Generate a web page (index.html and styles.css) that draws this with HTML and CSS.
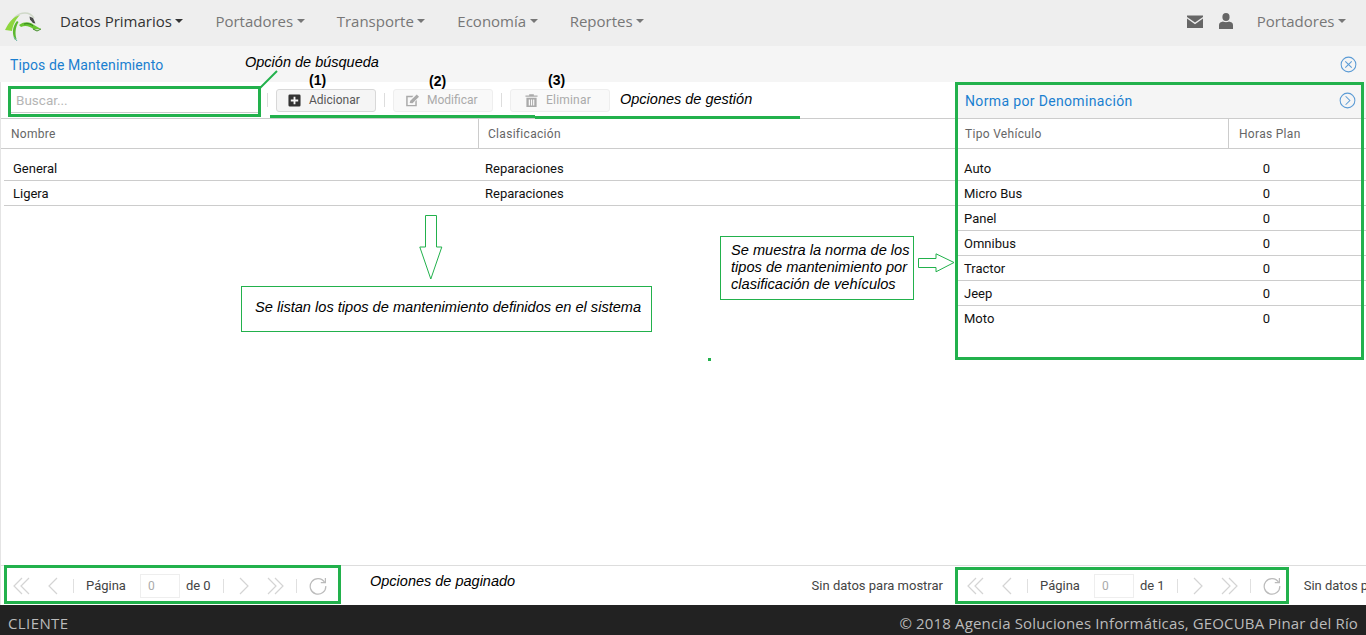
FILE: index.html
```html
<!DOCTYPE html>
<html lang="es">
<head>
  <meta charset="UTF-8" />
  <meta name="viewport" content="width=device-width, initial-scale=1.0" />
  <title>Tipos de Mantenimiento</title>
  <link rel="stylesheet" href="styles.css">
</head>
<body>
  <div class="app">
    <nav class="navbar">
      <svg class="logo" viewBox="0 0 44 38" width="44" height="38">
        <path d="M10 23 C12 14 18 9 25 9 C29 9 32 11 34 14" fill="none" stroke="#cfd8c8" stroke-width="1.4"/>
        <path d="M5 26 C9 18 13 13 20 11 C16 15 13 20 12 27 C10 27 8 26 5 26 Z" fill="#8ed63f"/>
        <path d="M15 36 C12 30 12 23 17 17 L18.5 18 C15 24 15 30 16.5 35 Z" fill="#5cb82e"/>
        <path d="M14 33 L17 37" stroke="#6ab5a8" stroke-width="1"/>
        <path d="M19 21 C25 17 30 18 34 21 L41 25 L34 25.5 C30 22 25 21 21 23 Z" fill="#69c531"/>
        <path d="M24 20 C28 19 31 20 33 22" fill="none" stroke="#2f7d1f" stroke-width="1"/>
        <path d="M29.5 12.5 L33 14 L35.5 19.5 L33 19 L30 15.5 Z" fill="#4a4a4a"/>
        <path d="M33 25 L37 27 L41 25" fill="none" stroke="#3d8a22" stroke-width="1"/>
      </svg>
      <a class="nav-item active">Datos Primarios<i class="caret"></i></a>
      <a class="nav-item">Portadores<i class="caret"></i></a>
      <a class="nav-item">Transporte<i class="caret"></i></a>
      <a class="nav-item">Economía<i class="caret"></i></a>
      <a class="nav-item">Reportes<i class="caret"></i></a>
      <div class="nav-right">
        <svg class="nav-icon" viewBox="0 0 16 13" width="16" height="13">
          <path d="M0 0.5 H16 V2 L8 7.5 L0 2 Z"/>
          <path d="M0 3.6 L8 9.2 L16 3.6 V13 H0 Z"/>
        </svg>
        <svg class="nav-icon user-icon" viewBox="0 0 14 16" width="14" height="16">
          <ellipse cx="7" cy="4" rx="3.6" ry="4"/>
          <path d="M0 16 V12 C0 10 2 9 4 8.6 C5 9.4 9 9.4 10 8.6 C12 9 14 10 14 12 V16 Z"/>
        </svg>
        <a class="nav-item">Portadores<i class="caret"></i></a>
      </div>
    </nav>

    <div class="title-bar">
      <span class="panel-title">Tipos de Mantenimiento</span>
      <svg class="circle-btn" viewBox="0 0 18 18" width="17" height="17">
        <circle cx="9" cy="9" r="7.8"/>
        <path d="M5.6 5.6 L12.4 12.4 M12.4 5.6 L5.6 12.4"/>
      </svg>
    </div>

    <div class="content">
      <section class="grid-left">
        <div class="toolbar">
          <input class="search" type="text" placeholder="Buscar..." />
          <span class="tb-sep"></span>
          <button class="tb-btn">
            <svg viewBox="0 0 14 14" width="13" height="13"><path fill-rule="evenodd" d="M2 0.5 H12 A1.5 1.5 0 0 1 13.5 2 V12 A1.5 1.5 0 0 1 12 13.5 H2 A1.5 1.5 0 0 1 0.5 12 V2 A1.5 1.5 0 0 1 2 0.5 Z M6 3 V6 H3 V8 H6 V11 H8 V8 H11 V6 H8 V3 Z"/></svg>
            Adicionar
          </button>
          <span class="tb-sep"></span>
          <button class="tb-btn disabled tb-edit">
            <svg viewBox="0 0 16 14" width="15" height="13"><path d="M1.5 2 H9 L7.6 3.5 H2.8 V11.8 H11 V8 L12.6 6.4 V13.3 H1.2 V2 Z"/><path d="M5 9.8 L5.6 7.4 L12.6 0.6 L15 3 L8 9.9 Z"/></svg>
            Modificar
          </button>
          <span class="tb-sep"></span>
          <button class="tb-btn disabled tb-del">
            <svg viewBox="0 0 14 14" width="13" height="13"><path d="M0.5 1.5 H4.5 V0.3 H9.5 V1.5 H13.5 V3 H0.5 Z"/><path fill-rule="evenodd" d="M1.5 4 H12.5 V14 H1.5 Z M4 6 V12.5 H5.4 V6 Z M6.4 6 V12.5 H7.7 V6 Z M8.7 6 V12.5 H10 V6 Z"/></svg>
            Eliminar
          </button>
        </div>
        <div class="grid-head">
          <div class="head-cell col-name">Nombre</div>
          <div class="head-cell col-class">Clasificación</div>
        </div>
        <div class="grid-body">
          <div class="row"><span class="col-name">General</span><span>Reparaciones</span></div>
          <div class="row"><span class="col-name">Ligera</span><span>Reparaciones</span></div>
        </div>
        <div class="pager">
          <svg class="pg-ico pg-first" viewBox="0 0 17 18" width="17" height="18"><path d="M9 1 L1 9 L9 17 M16 1 L8 9 L16 17"/></svg>
          <svg class="pg-ico pg-prev" viewBox="0 0 12 18" width="12" height="18"><path d="M10 1 L2 9 L10 17"/></svg>
          <span class="pg-sep sep-a"></span>
          <span class="pg-label">Página</span>
          <input class="pg-input" type="text" value="0" disabled />
          <span class="pg-of">de 0</span>
          <span class="pg-sep sep-b"></span>
          <svg class="pg-ico pg-next" viewBox="0 0 12 18" width="12" height="18"><path d="M2 1 L10 9 L2 17"/></svg>
          <svg class="pg-ico pg-last" viewBox="0 0 17 18" width="17" height="18"><path d="M1 1 L9 9 L1 17 M8 1 L16 9 L8 17"/></svg>
          <span class="pg-sep sep-c"></span>
          <svg class="pg-ico pg-refresh" viewBox="0 0 18 18" width="18" height="18"><path d="M15.6 5.2 A7.8 7.8 0 1 0 16.8 9"/><path d="M16.4 1 V5.6 H11.8"/></svg>
          <span class="pg-info">Sin datos para mostrar</span>
        </div>
      </section>

      <aside class="grid-right">
        <div class="side-title">
          <span class="panel-title">Norma por Denominación</span>
          <svg class="circle-btn" viewBox="0 0 18 18" width="17" height="17">
            <circle cx="9" cy="9" r="7.8"/>
            <path d="M7 4.5 L11.5 9 L7 13.5"/>
          </svg>
        </div>
        <div class="grid-head">
          <div class="head-cell col-type">Tipo Vehículo</div>
          <div class="head-cell col-hours">Horas Plan</div>
        </div>
        <div class="grid-body">
          <div class="row side-row"><span class="col-type">Auto</span><span class="cell-num">0</span></div>
          <div class="row side-row"><span class="col-type">Micro Bus</span><span class="cell-num">0</span></div>
          <div class="row side-row"><span class="col-type">Panel</span><span class="cell-num">0</span></div>
          <div class="row side-row"><span class="col-type">Omnibus</span><span class="cell-num">0</span></div>
          <div class="row side-row"><span class="col-type">Tractor</span><span class="cell-num">0</span></div>
          <div class="row side-row"><span class="col-type">Jeep</span><span class="cell-num">0</span></div>
          <div class="row side-row no-line"><span class="col-type">Moto</span><span class="cell-num">0</span></div>
        </div>
        <div class="pager pager-side">
          <svg class="pg-ico pg-first" viewBox="0 0 17 18" width="17" height="18"><path d="M9 1 L1 9 L9 17 M16 1 L8 9 L16 17"/></svg>
          <svg class="pg-ico pg-prev" viewBox="0 0 12 18" width="12" height="18"><path d="M10 1 L2 9 L10 17"/></svg>
          <span class="pg-sep sep-a"></span>
          <span class="pg-label">Página</span>
          <input class="pg-input" type="text" value="0" disabled />
          <span class="pg-of">de 1</span>
          <span class="pg-sep sep-b"></span>
          <svg class="pg-ico pg-next" viewBox="0 0 12 18" width="12" height="18"><path d="M2 1 L10 9 L2 17"/></svg>
          <svg class="pg-ico pg-last" viewBox="0 0 17 18" width="17" height="18"><path d="M1 1 L9 9 L1 17 M8 1 L16 9 L8 17"/></svg>
          <span class="pg-sep sep-c"></span>
          <svg class="pg-ico pg-refresh" viewBox="0 0 18 18" width="18" height="18"><path d="M15.6 5.2 A7.8 7.8 0 1 0 16.8 9"/><path d="M16.4 1 V5.6 H11.8"/></svg>
          <span class="pg-clipped">Sin datos para mostrar</span>
        </div>
      </aside>
    </div>

    <footer class="footer">
      <span class="client">CLIENTE</span>
      <span class="copy">© 2018 Agencia Soluciones Informáticas, GEOCUBA Pinar del Río</span>
    </footer>
  </div>

  <!-- anotaciones del manual, encima de la pantalla -->
  <div class="note note-search">Opción de búsqueda</div>
  <svg class="mark mark-leader" width="24" height="20" viewBox="0 0 24 20"><path d="M2 19 L19 2"/></svg>
  <div class="frame frame-search"></div>
  <div class="num num-1">(1)</div>
  <div class="num num-2">(2)</div>
  <div class="num num-3">(3)</div>
  <div class="underline underline-a"></div>
  <div class="underline underline-b"></div>
  <div class="note note-gestion">Opciones de gestión</div>
  <div class="frame frame-side"></div>
  <div class="frame frame-pager-left"></div>
  <div class="frame frame-pager-right"></div>
  <div class="note note-pager">Opciones de paginado</div>
  <div class="box box-list">Se listan los tipos de mantenimiento definidos en el sistema</div>
  <div class="box box-side">Se muestra la norma de los tipos de mantenimiento por clasificación de vehículos</div>
  <svg class="arrow arrow-down" width="24" height="66" viewBox="0 0 24 66"><path d="M6.5 0.5 H17.5 V32 H22.8 L11.8 64 L0.8 32 H6.5 Z"/></svg>
  <svg class="arrow arrow-right" width="38" height="20" viewBox="0 0 38 20"><path d="M0.5 5.5 H18 V0.8 L36 9.5 L18 18.8 V14.5 H0.5 Z"/></svg>
  <div class="dot"></div>
</body>
</html>
```

FILE: styles.css
```css
* {
  box-sizing: border-box;
  margin: 0;
  padding: 0;
}

html, body {
  height: 100%;
  overflow: hidden;
  background: #fff;
  font-family: Roboto, 'Liberation Sans', sans-serif;
  font-size: 13px;
  color: #111;
}

.app {
  display: flex;
  flex-direction: column;
  height: 635px;
}

/* navbar */
.navbar {
  display: flex;
  align-items: center;
  height: 46px;
  padding-bottom: 4px;
  background: #eee;
  flex: none;
}

.logo {
  flex: none;
  margin-top: 4px;
}

.nav-item {
  display: flex;
  align-items: center;
  padding: 0 16px;
  font-family: 'Open Sans', sans-serif;
  font-size: 15px;
  color: #777;
}

.nav-item.active {
  color: #333;
}

.caret {
  width: 0;
  height: 0;
  margin-left: 3.5px;
  border-top: 4px solid currentColor;
  border-left: 4px solid transparent;
  border-right: 4px solid transparent;
}

.nav-right {
  display: flex;
  align-items: center;
  margin-left: auto;
  padding-right: 4px;
}

.nav-icon {
  fill: #666;
  margin-right: 16px;
}

.user-icon {
  margin-right: 8px;
}

/* titles */
.title-bar {
  display: flex;
  align-items: center;
  justify-content: space-between;
  flex: none;
  height: 36px;
  padding: 1px 9px 0 10px;
  background: #f5f5f5;
}

.side-title {
  display: flex;
  align-items: center;
  justify-content: space-between;
  flex: none;
  height: 37px;
  padding: 1px 10px 0;
  background: #f5f5f5;
  border-bottom: 1px solid #ccc;
}

.panel-title {
  font-size: 14px;
  letter-spacing: 0.1px;
  color: #1a7fd0;
}

.side-title .panel-title {
  letter-spacing: 0.35px;
}

.circle-btn {
  fill: none;
  stroke: #5b9bd5;
  stroke-width: 1.1;
}

.content {
  display: flex;
  flex: 1;
  min-height: 0;
}

.grid-left {
  display: flex;
  flex-direction: column;
  width: 955px;
  border-left: 1px solid #e4e4e4;
}

.grid-right {
  display: flex;
  flex-direction: column;
  width: 411px;
  overflow: hidden;
}

/* toolbar */
.toolbar {
  display: flex;
  align-items: center;
  flex: none;
  height: 37px;
  padding-left: 9px;
  border-bottom: 1px solid #ccc;
}

.search {
  width: 249px;
  height: 25px;
  padding: 1px 6px 0;
  border: none;
  border-bottom: 1px solid #ccc;
  outline: none;
  font-family: inherit;
  font-size: 13.5px;
  background: #fff;
}

.search::placeholder {
  color: #b5b5b5;
}

.tb-sep {
  width: 1px;
  height: 14px;
  background: #ddd;
  margin: 0 8px;
}

.tb-btn {
  display: flex;
  align-items: center;
  gap: 8px;
  width: 100px;
  height: 23px;
  padding-left: 11px;
  border: 1px solid #d8d8d8;
  border-radius: 3px;
  background: #f5f5f5;
  font-family: inherit;
  font-size: 12px;
  color: #555;
}

.tb-btn svg {
  fill: #333;
  flex: none;
}

.tb-btn.disabled {
  border-color: #eee;
  background: #f9f9f9;
  color: #aaa;
}

.tb-btn.disabled svg {
  fill: #aaa;
}

.tb-edit {
  gap: 7px;
}

.tb-del {
  padding-left: 14px;
  letter-spacing: 0.2px;
}

/* grids */
.grid-head {
  display: flex;
  flex: none;
  height: 30px;
  border-bottom: 1px solid #ccc;
  font-size: 12px;
  color: #666;
}

.head-cell {
  display: flex;
  align-items: center;
  padding-left: 10px;
  letter-spacing: 0.3px;
}

.grid-left .col-name {
  width: 477px;
}

.col-class {
  border-left: 1px solid #ccc;
  padding-left: 9px;
}

.grid-body {
  flex: 1;
  padding-top: 7px;
  padding-left: 3px;
}

.row {
  display: flex;
  align-items: center;
  height: 25px;
  border-bottom: 1px solid #ccc;
}

.row .col-name {
  width: 481px;
  padding-left: 9px;
}

.grid-right .grid-body {
  padding-left: 0;
}

.col-type {
  width: 273px;
}

.head-cell.col-type {
  padding-left: 10px;
}

.col-hours {
  border-left: 1px solid #ccc;
  padding-left: 10px;
}

.side-row .col-type {
  padding-left: 9px;
}

.cell-num {
  width: 77px;
  text-align: center;
}

.no-line {
  border-bottom: none;
}

/* pager */
.pager {
  display: flex;
  align-items: center;
  flex: none;
  height: 40px;
  padding-left: 12px;
  border-top: 1px solid #ddd;
  color: #444;
  white-space: nowrap;
}

.pg-ico {
  flex: none;
  fill: none;
  stroke: #d4d4d4;
  stroke-width: 1.2;
}

.pg-refresh {
  stroke: #bbb;
}

.pg-prev {
  margin-left: 17px;
}

.pg-sep {
  flex: none;
  width: 1px;
  height: 14px;
  background: #e0e0e0;
}

.sep-a {
  margin: 0 12px 0 14px;
}

.sep-b {
  margin: 0 14px 0 12px;
}

.sep-c {
  margin: 0 12px;
}

.pg-last {
  margin-left: 17px;
}

.pg-input {
  width: 40px;
  height: 24px;
  margin: 0 6px 0 14px;
  padding-left: 7px;
  border: 1px solid #eee;
  background: #fff;
  font-family: inherit;
  font-size: 12px;
  color: #aaa;
}

.pg-info {
  margin-left: auto;
  margin-right: 12px;
}

.pg-clipped {
  margin-left: 23px;
}

/* footer */
.footer {
  display: flex;
  align-items: center;
  justify-content: space-between;
  flex: none;
  height: 30px;
  padding: 5px 8px 0;
  background: #222;
  color: #bbb;
  font-family: 'Open Sans', sans-serif;
  font-size: 15px;
}

.client {
  letter-spacing: 0.4px;
}

.copy {
  letter-spacing: 0.15px;
}

/* annotations on top of the screen */
.note, .num, .box, .frame, .underline, .mark, .arrow, .dot {
  position: absolute;
}

.note, .box {
  font-family: 'Liberation Sans', sans-serif;
  font-style: italic;
  font-size: 14.5px;
  color: #000;
}

.num {
  font-family: 'Liberation Sans', sans-serif;
  font-weight: bold;
  font-size: 14px;
  color: #000;
}

.frame {
  border: 3px solid #22b14c;
}

.frame-search { left: 8px; top: 86px; width: 253px; height: 31px; }
.frame-side { left: 955px; top: 82px; width: 409px; height: 278px; }
.frame-pager-left { left: 4px; top: 565px; width: 337px; height: 39px; }
.frame-pager-right { left: 955px; top: 567px; width: 334px; height: 37px; }

.underline {
  height: 3px;
  background: #22b14c;
}

.underline-a { left: 270px; top: 115px; width: 265px; }
.underline-b { left: 535px; top: 116px; width: 265px; }

.mark path {
  fill: none;
  stroke: #22b14c;
  stroke-width: 2;
}

.mark-leader { left: 258px; top: 69px; }

.note-search { left: 245px; top: 54px; }
.note-gestion { left: 620px; top: 91px; }
.note-pager { left: 370px; top: 573px; }

.num-1 { left: 309px; top: 72px; }
.num-2 { left: 429px; top: 73px; }
.num-3 { left: 548px; top: 72px; }

.box {
  border: 1px solid #22b14c;
  background: #fff;
  font-size: 14.6px;
}

.box-list {
  left: 241px;
  top: 286px;
  width: 411px;
  height: 46px;
  padding: 12px 0 0 13px;
}

.box-side {
  left: 720px;
  top: 236px;
  width: 194px;
  height: 64px;
  padding: 5px 0 0 10px;
  line-height: 17px;
}

.arrow path {
  fill: #fff;
  stroke: #22b14c;
  stroke-width: 1;
}

.arrow-down { left: 419px; top: 215px; }
.arrow-right { left: 918px; top: 253px; }

.dot {
  left: 708px;
  top: 358px;
  width: 3px;
  height: 3px;
  background: #22b14c;
}
```
